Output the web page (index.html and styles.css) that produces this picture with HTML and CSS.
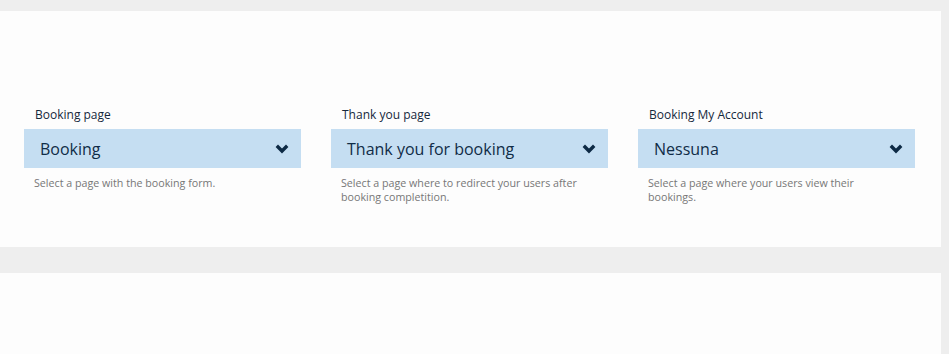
FILE: index.html
```html
<!DOCTYPE html>
<html lang="en">
<head>
    <meta charset="UTF-8">
    <meta name="viewport" content="width=device-width, initial-scale=1.0">
    <title>Booking settings</title>
    <link rel="stylesheet" href="styles.css">
</head>
<body>

<div class="page">
    <div class="card">
        <div class="fields">
            <div class="field">
                <div class="label">Booking page</div>
                <div class="select">
                    <span class="value">Booking</span>
                    <svg class="chevron" viewBox="0 0 14 10" width="14" height="10"><path d="M1.8 1.8 L7 7 L12.2 1.8" fill="none" stroke="currentColor" stroke-width="3.4"/></svg>
                </div>
                <div class="help">Select a page with the booking form.</div>
            </div>
            <div class="field">
                <div class="label">Thank you page</div>
                <div class="select">
                    <span class="value">Thank you for booking</span>
                    <svg class="chevron" viewBox="0 0 14 10" width="14" height="10"><path d="M1.8 1.8 L7 7 L12.2 1.8" fill="none" stroke="currentColor" stroke-width="3.4"/></svg>
                </div>
                <div class="help">Select a page where to redirect your users after booking completition.</div>
            </div>
            <div class="field">
                <div class="label">Booking My Account</div>
                <div class="select">
                    <span class="value">Nessuna</span>
                    <svg class="chevron" viewBox="0 0 14 10" width="14" height="10"><path d="M1.8 1.8 L7 7 L12.2 1.8" fill="none" stroke="currentColor" stroke-width="3.4"/></svg>
                </div>
                <div class="help">Select a page where your users view their bookings.</div>
            </div>
        </div>
    </div>
    <div class="card card-next"></div>
</div>

</body>
</html>
```

FILE: styles.css
```css
* {
    margin: 0;
    padding: 0;
    box-sizing: border-box;
    font-family: 'Open Sans', sans-serif;
}

body {
    background-color: #eeeeee;
}

.page {
    padding: 11px 8px 0 0;
    display: flex;
    flex-direction: column;
    gap: 26px;
}

.card {
    background-color: #fdfdfd;
    padding: 95px 26px 43px 24px;
}

.card-next {
    height: 90px;
    padding: 0;
}

.fields {
    display: flex;
    gap: 30px;
}

.field {
    flex: 1;
}

.label {
    font-size: 12px;
    line-height: 17px;
    color: #15283c;
    margin-bottom: 6px;
    padding-left: 11px;
}

.select {
    height: 39px;
    background-color: #c5def2;
    display: flex;
    align-items: center;
    justify-content: space-between;
    padding: 0 12px 0 16px;
    color: #102c47;
}

.value {
    font-size: 16px;
}

.chevron {
    color: #0d2a45;
}

.help {
    margin-top: 8px;
    font-size: 10.7px;
    line-height: 14px;
    color: #777777;
    padding: 0 20px 0 10px;
}
```
